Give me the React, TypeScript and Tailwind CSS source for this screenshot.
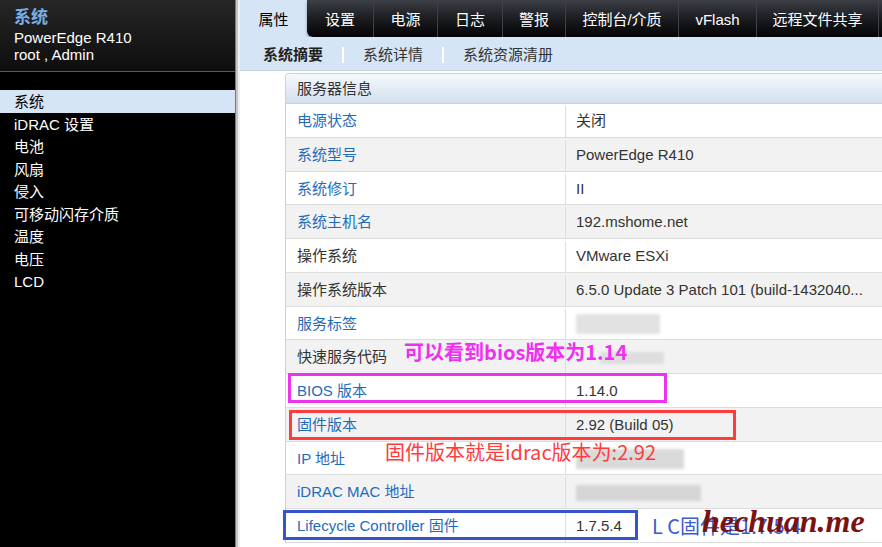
import React from 'react';

type Row = {
  label: string;
  value?: string;
  link: boolean;
  blur?: { w: string; h: string; ml?: string; bg: string };
};

const menu = ['系统', 'iDRAC 设置', '电池', '风扇', '侵入', '可移动闪存介质', '温度', '电压', 'LCD'];

const tabs = [
  { label: '设置', w: 'w-[66px]' },
  { label: '电源', w: 'w-[64px]' },
  { label: '日志', w: 'w-[65px]' },
  { label: '警报', w: 'w-[63px]' },
  { label: '控制台/介质', w: 'w-[113px]' },
  { label: 'vFlash', w: 'w-[78px]' },
  { label: '远程文件共享', w: 'w-[122px]' },
];

const rows: Row[] = [
  { label: '电源状态', value: '关闭', link: true },
  { label: '系统型号', value: 'PowerEdge R410', link: true },
  { label: '系统修订', value: 'II', link: true },
  { label: '系统主机名', value: '192.mshome.net', link: true },
  { label: '操作系统', value: 'VMware ESXi', link: false },
  { label: '操作系统版本', value: '6.5.0 Update 3 Patch 101 (build-1432040...', link: false },
  { label: '服务标签', link: true, blur: { w: 'w-[84px]', h: 'h-[20px]', bg: 'bg-[#e2e2e2]' } },
  { label: '快速服务代码', link: false, blur: { w: 'w-[64px]', h: 'h-[12px]', ml: 'ml-[24px]', bg: 'bg-[#dedede]' } },
  { label: 'BIOS 版本', value: '1.14.0', link: true },
  { label: '固件版本', value: '2.92 (Build 05)', link: true },
  { label: 'IP 地址', link: true, blur: { w: 'w-[108px]', h: 'h-[20px]', bg: 'bg-[#dadada]' } },
  { label: 'iDRAC MAC 地址', link: true, blur: { w: 'w-[125px]', h: 'h-[16px]', bg: 'bg-[#d6d6d6]' } },
  { label: 'Lifecycle Controller 固件', value: '1.7.5.4', link: true },
];

export default function App() {
  return (
    <div className="relative flex w-[882px] h-[547px] overflow-hidden bg-white font-['Liberation_Sans','Noto_Sans_CJK_SC',sans-serif] text-[15px]">
      {/* sidebar */}
      <aside className="w-[235px] shrink-0 bg-black text-white">
        <div className="h-[72px] pl-[14px] pt-[7px] bg-linear-to-b from-[#262626] to-[#0e0e0e] border-b border-[#5a5a5a]">
          <div className="text-[17px] leading-[22px] font-bold text-[#78aee8]">系统</div>
          <div className="leading-[17px]">PowerEdge R410</div>
          <div className="leading-[17px]">root , Admin</div>
        </div>
        <ul className="mt-[18px]">
          {menu.map((m, i) => (
            <li
              key={m}
              className={`h-[22.5px] leading-[24px] pl-[14px] ${i === 0 ? 'bg-[#d5e5f6] text-black' : 'text-white'}`}
            >
              {m}
            </li>
          ))}
        </ul>
      </aside>

      <div className="flex shrink-0">
        <div className="w-[1px] bg-[#7a7a7a]" />
        <div className="w-[2px] bg-[#c6c6c6]" />
        <div className="w-[2px] bg-[#f0f0f0]" />
      </div>

      {/* main */}
      <main className="flex-1 flex flex-col min-w-0">
        <div className="flex h-[37px] bg-[#d5e5f6]">
          <div className="w-[67px] shrink-0 flex items-center justify-center pt-[3px] text-black">属性</div>
          <div className="flex flex-1 rounded-bl-[6px] bg-linear-to-b from-[#3c3f46] via-[#1b1d21] to-[#050505] shadow-[0_2px_3px_rgba(0,0,0,0.35)] text-white">
            {tabs.map((t, i) => (
              <div
                key={t.label}
                className={`${t.w} shrink-0 flex items-center justify-center pt-[3px] ${i > 0 ? 'border-l border-[#3e4147]' : ''}`}
              >
                {t.label}
              </div>
            ))}
            <div className="flex-1 border-l border-[#3e4147]" />
          </div>
        </div>

        <div className="flex items-center h-[34px] pl-[23px] pt-[3px] bg-[#d5e5f6] border-b border-[#c4d2e0] text-[#333]">
          <span className="font-bold text-[#222]">系统摘要</span>
          <span className="mx-[19px] w-[2px] h-[16px] bg-white" />
          <span>系统详情</span>
          <span className="mx-[19px] w-[2px] h-[16px] bg-white" />
          <span>系统资源清册</span>
        </div>

        <div className="flex-1 pl-[45px] pt-[2px]">
          <div className="border-l border-t border-[#c9d0d8] rounded-tl-[4px]">
            <div className="h-[30px] flex items-center pl-[11px] pt-[1px] text-[#333] bg-linear-to-b from-[#f5f9fd] to-[#d3e0ed] border-b border-[#c9d2dc] rounded-tl-[4px]">
              服务器信息
            </div>
            {rows.map((r, i) => (
              <div
                key={r.label}
                className={`flex h-[33.75px] pt-[2px] border-b border-[#dddddd] ${i % 2 ? 'bg-[#f2f2f2]' : 'bg-white'}`}
              >
                <div
                  className={`w-[280px] shrink-0 flex items-center pl-[11px] border-r border-[#dddddd] ${r.link ? 'text-[#1f6bbb]' : 'text-[#333]'}`}
                >
                  {r.label}
                </div>
                <div className="flex-1 flex items-center pl-[10px] text-[#333] whitespace-nowrap">
                  {r.value}
                  {r.blur && <div className={`${r.blur.w} ${r.blur.h} ${r.blur.ml ?? ''} ${r.blur.bg} blur-[1.5px]`} />}
                </div>
              </div>
            ))}
          </div>
        </div>
      </main>

      {/* annotations */}
      <div className="absolute left-[404px] top-[339px] text-[20px] leading-[26px] text-[#f030f0] font-['Noto_Sans_CJK_SC',sans-serif] font-semibold">
        可以看到bios版本为1.14
      </div>
      <div className="absolute left-[288px] top-[373px] w-[379px] h-[30px] border-[3px] border-[#ee33ee]" />
      <div className="absolute left-[289px] top-[410px] w-[447px] h-[30px] border-[3px] border-[#ff3b3b]" />
      <div className="absolute left-[385px] top-[438px] text-[20px] leading-[28px] text-[#ff3b3b] font-['Noto_Sans_CJK_SC',sans-serif]">
        固件版本就是idrac版本为:2.92
      </div>
      <div className="absolute left-[283px] top-[510px] w-[355px] h-[30px] border-[3px] border-[#3553cf]" />
      <div className="absolute left-[652px] top-[512px] text-[20px] leading-[28px] text-[#3a5ccf] font-['Noto_Sans_CJK_SC',sans-serif]">
        L C固件是1.7.5.4
      </div>
      <div className="absolute left-[702px] top-[501px] text-[32px] leading-[40px] italic font-bold text-[#7a1212] font-['Liberation_Serif',serif]">
        hechuan.me
      </div>
    </div>
  );
}
